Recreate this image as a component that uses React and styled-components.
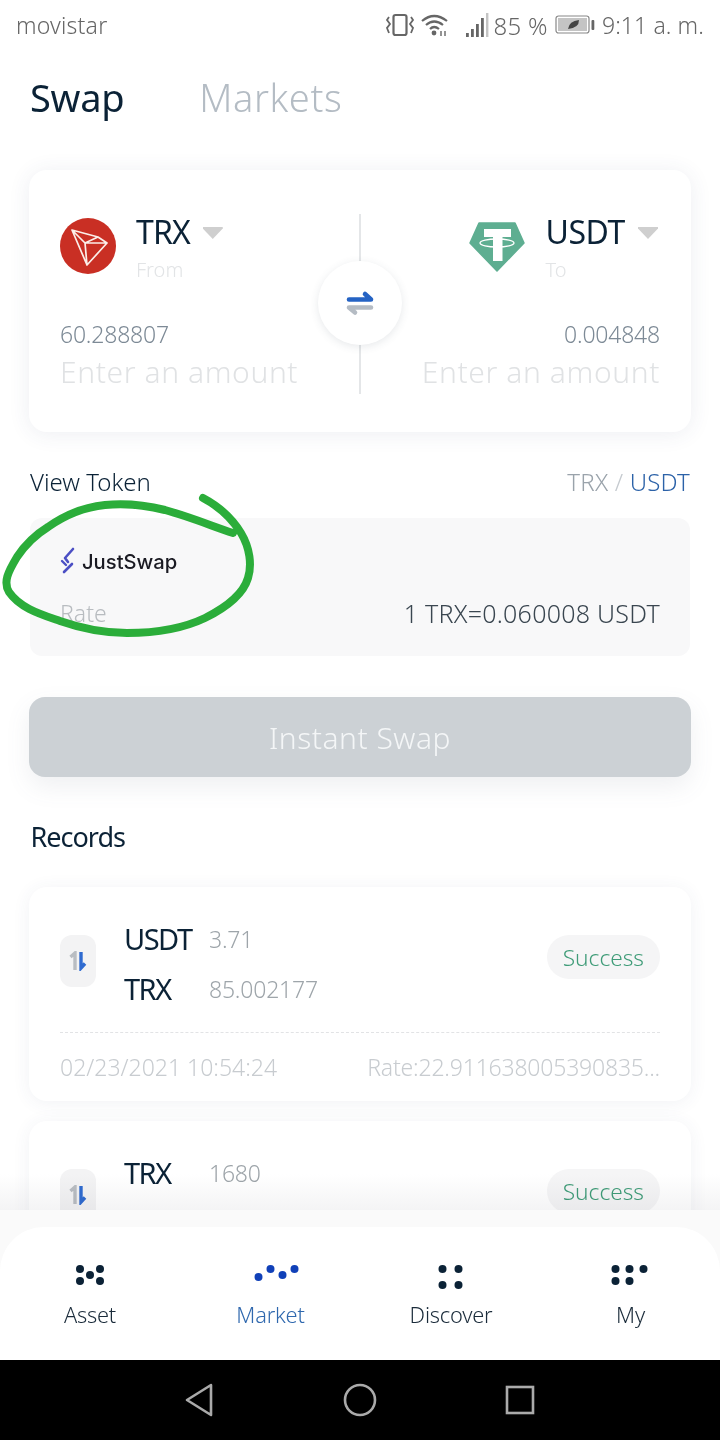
import React from "react";
import styled, { createGlobalStyle } from "styled-components";

const Global = createGlobalStyle`
  html, body { margin: 0; padding: 0; background: #fff; }
  body { font-family: "Noto Sans", "Open Sans", sans-serif; font-weight: 300; }
`;
const Phone = styled.div`
  position: relative; width: 720px; height: 1440px; display: flex; flex-direction: column;
  overflow: hidden; background: #fff;
`;
const StatusBar = styled.div`
  height: 50px; flex: none; display: flex; align-items: center; justify-content: space-between;
  padding: 0 16px; color: #666; font-size: 23px; letter-spacing: .2px; box-sizing: border-box;
`;
const StatusRight = styled.div`display: flex; align-items: center; color: #666; gap: 5px; letter-spacing: 0;`;
const StatusPct = styled.span`font-size: 24px; letter-spacing: .3px;`;
const StatusTime = styled.span`font-size: 23px; letter-spacing: .1px;`;
const Scroll = styled.div`flex: 1; min-height: 0; overflow: hidden; position: relative; display: flex; flex-direction: column; padding: 0 29px;`;
const Tabs = styled.div`display: flex; flex: none; gap: 75px; height: 120px; align-items: center; padding: 0 1px 26px; box-sizing: border-box;`;
const TabTitle = styled.div`font-size: 38px; font-weight: ${p => p.$on ? 400 : 300}; color: ${p => p.$on ? "#0b2236" : "#b4bcc4"}; letter-spacing: ${p => p.$on ? "-0.3px" : "0.6px"};`;
const SwapCard = styled.div`
  height: 262px; flex: none; border-radius: 18px; background: #fff; box-shadow: 0 2px 22px rgba(60,70,110,.09);
  display: grid; grid-template-columns: 1fr 1fr; position: relative; padding: 0 31px; box-sizing: border-box;
`;
const Side = styled.div`display: flex; flex-direction: column; align-items: ${p => p.$right ? "flex-end" : "flex-start"}; padding-top: 48px;`;
const TokenRow = styled.div`display: flex; gap: 20px; height: 100px; align-items: flex-start; margin-right: ${p => p.$right ? "2px" : "0"};`;
const TokenText = styled.div`display: flex; flex-direction: column; align-items: flex-start; margin-top: -4px;`;
const TokenName = styled.div`display: flex; align-items: center; gap: 13px; font-size: 32px; line-height: 36px; color: #0b2236; font-weight: 400; letter-spacing: ${p => p.$right ? "-.4px" : "-.9px"};`;
const Caret = styled.span`width: 20px; height: 12px; margin-top: 2px; background: #cfcfcf; clip-path: polygon(0 0, 100% 0, 100% 12%, 50% 100%, 0 12%);`;
const Dir = styled.div`font-size: 20px; line-height: 28px; color: #e2e4e6; margin-top: 6px;`;
const Balance = styled.div`font-size: 23px; line-height: 32px; color: #7d8a96; letter-spacing: -.2px;`;
const Amount = styled.div`font-size: 30px; line-height: 44px; color: #e0e2e4; letter-spacing: .6px;`;
const Divider = styled.div`position: absolute; left: 330px; top: 44px; bottom: 38px; width: 2px; background: #e4e6e8;`;
const SwapBtn = styled.div`
  position: absolute; left: 289px; top: 91px; width: 84px; height: 84px; border-radius: 50%; background: #fff;
  box-shadow: 0 2px 8px rgba(60,70,90,.12); display: flex; align-items: center; justify-content: center;
`;
const ViewRow = styled.div`display: flex; flex: none; justify-content: space-between; align-items: center; margin: 33px 1px 0; height: 32px;`;
const ViewLabel = styled.div`font-size: 24px; color: #0b2236;`;
const Pair = styled.div`font-size: 24px; color: #9aa3ab; letter-spacing: .2px; span { color: #2c62a8; } i { font-style: normal; color: #c5cacf; }`;
const RatePanel = styled.div`
  margin: 21px 1px 0; height: 138px; flex: none; border-radius: 12px; background: #f8f8f9; padding: 0 30px;
  display: flex; flex-direction: column; box-sizing: border-box;
`;
const Logo = styled.div`display: flex; align-items: center; gap: 5px; height: 32px; margin-top: 27px;`;
const LogoText = styled.span`font-family: "Inter", sans-serif; font-size: 20.2px; font-weight: 500; color: #1a1a22; letter-spacing: 0;`;
const RateRow = styled.div`display: flex; justify-content: space-between; align-items: center; margin-top: 18px; line-height: 36px;`;
const RateLabel = styled.span`font-size: 23px; color: #b8bcc0;`;
const RateValue = styled.span`font-size: 25px; color: #3a4650; letter-spacing: .25px;`;
const SwapAction = styled.div`
  margin-top: 41px; height: 80px; flex: none; border-radius: 16px; background: #ccd1d5; color: #f4f6f7;
  display: flex; align-items: center; justify-content: center; font-size: 30px; letter-spacing: .5px;
  box-shadow: 0 10px 24px rgba(100,110,130,.1);
`;
const RecordsTitle = styled.div`flex: none; font-size: 27px; line-height: 40px; margin: 40px 2px 30px 1.5px; color: #0b2236; font-weight: 400; letter-spacing: -1px;`;
const RecordCard = styled.div`
  flex: none; height: 214px; border-radius: 18px; background: #fff; box-shadow: 0 2px 18px rgba(60,70,110,.07);
  padding: 27px 31px 0; box-sizing: border-box; margin-bottom: 20px; display: flex; flex-direction: column;
`;
const RecordTop = styled.div`display: flex; align-items: flex-start; height: 118px; box-sizing: border-box;`;
const SwapChip = styled.div`width: 36px; height: 52px; margin-top: 21px; border-radius: 12px; background: #f3f3f4; display: flex; align-items: center; justify-content: center; flex: none; margin-right: 28px;`;
const Lines = styled.div`display: flex; flex-direction: column; gap: 14px; flex: 1; margin-top: 7px;`;
const Line = styled.div`display: flex; align-items: center; line-height: 36px; height: 36px;`;
const LineName = styled.div`width: 85px; font-size: 29px; font-weight: 400; color: #0b2236; letter-spacing: -1.5px;`;
const LineValue = styled.div`font-size: 23px; color: #9ea5aa; letter-spacing: -.2px;`;
const Badge = styled.div`height: 44px; margin-top: 21px; padding: 0 16px; border-radius: 22px; background: #f5f5f6; color: #3f9c78; font-size: 22.7px; display: flex; align-items: center;`;
const Dashed = styled.div`border-top: 1px dashed #e2e3e5;`;
const RecordBottom = styled.div`display: flex; justify-content: space-between; align-items: center; margin-top: 18px; font-size: 23px; color: #c8ccd0; white-space: nowrap;`;
const RateText = styled.span`letter-spacing: -.2px;`;
const Fade = styled.div`position: absolute; left: 0; right: 0; bottom: 0; height: 36px; background: linear-gradient(to bottom, #fff, #f4f4f5); mix-blend-mode: multiply;`;
const TabBarShell = styled.div`height: 150px; flex: none; background: #fafafa;`;
const TabBar = styled.div`
  height: 133px; margin-top: 17px; background: #fff; border-radius: 44px 44px 0 0; display: grid;
  grid-template-columns: 180px 181px 180px 179px; box-sizing: border-box; padding-top: 38px;
`;
const TabItem = styled.div`display: flex; flex-direction: column; align-items: center; gap: 11px; font-size: 21.8px; letter-spacing: -.2px; color: ${p => p.$on ? "#2f68ae" : "#1a2b3a"}; line-height: 30px;`;
const NavBar = styled.div`height: 80px; flex: none; background: #000; display: flex; align-items: center; justify-content: center;`;
const NavSlot = styled.div`width: 160px; display: flex; justify-content: center;`;
const Scribble = styled.svg`position: absolute; left: 0; top: 0; pointer-events: none;`;

const Dots = ({ pts, color }) => (
  <svg width="60" height="24" viewBox="0 0 60 24">
    {pts.map(([x, y], i) => <circle key={i} cx={x} cy={y} r="4" fill={color} />)}
  </svg>
);

const TronLogo = () => (
  <svg width="56" height="56" viewBox="0 0 56 56">
    <circle cx="28" cy="28" r="28" fill="#c92f24" />
    <path d="M12 12 L38 19 L47 25 L27 47 Z M12 12 L25 25 L27 47 M25 25 L47 25 M25 25 L38 19" fill="none" stroke="#fbeee9" strokeWidth="1.7" strokeLinejoin="round" />
  </svg>
);
const TetherLogo = () => (
  <svg width="56" height="54" viewBox="0 0 56 54">
    <path d="M10 5 H46 L55 25 L28 53 L1 25 Z" fill="#5eae91" stroke="#5eae91" strokeWidth="1.5" strokeLinejoin="round" />
    <path d="M15 11 H42 V19 H33.5 V43 H24 V19 H15 Z" fill="#fff" />
    <ellipse cx="28" cy="25" rx="17" ry="4" fill="none" stroke="#fff" strokeWidth="1.3" />
  </svg>
);
const SwapArrows = () => (
  <svg width="28" height="26" viewBox="0 0 28 26">
    <path d="M3 9.5 H25 L19 4" fill="none" stroke="#2563c4" strokeWidth="4.6" strokeLinecap="round" strokeLinejoin="round" />
    <path d="M25 17.5 H3 L9 22.5" fill="none" stroke="#b5bcc4" strokeWidth="4.6" strokeLinecap="round" strokeLinejoin="round" />
  </svg>
);
const UpDown = () => (
  <svg width="18" height="20" viewBox="0 0 18 20">
    <path d="M6 19 V2 L1.5 6" fill="none" stroke="#b9bdc2" strokeWidth="3.4" />
    <path d="M12 1 V17 L16 12.5" fill="none" stroke="#2f6bd0" strokeWidth="3.4" />
  </svg>
);
const JustSwapMark = () => (
  <svg width="17" height="28" viewBox="0 0 17 28">
    <path d="M13 2 L5 11 L8 15" fill="none" stroke="#4b4fc4" strokeWidth="2.6" strokeLinejoin="round" strokeLinecap="round" />
    <path d="M12 17 L4 25" fill="none" stroke="#4b4fc4" strokeWidth="2.6" strokeLinecap="round" />
    <path d="M2 14 L6 18" fill="none" stroke="#4b4fc4" strokeWidth="2.4" strokeLinecap="round" />
  </svg>
);

const C = "#666";
const Vibrate = () => (
  <svg width="30" height="26" viewBox="0 0 30 26">
    <rect x="8.5" y="3" width="13" height="20" rx="2" fill="none" stroke={C} strokeWidth="2.2" />
    <path d="M4 5 L2 8 L5 12 L2 16 L4 21 M26 5 L28 8 L25 12 L28 16 L26 21" fill="none" stroke={C} strokeWidth="1.8" />
  </svg>
);
const Wifi = () => (
  <svg width="40" height="24" viewBox="0 0 40 24">
    <path d="M2 8 Q14 -2 27 8 M6 12 Q14 5 23 12 M10 16 Q14 12 19 16" fill="none" stroke={C} strokeWidth="2.2" />
    <circle cx="14" cy="20" r="2.4" fill={C} />
    <path d="M21 18 V23 M25 18 V23" stroke={C} strokeWidth="1.4" />
  </svg>
);
const Signal = () => (
  <svg width="24" height="28" viewBox="0 0 24 28">
    {[[1, 22, 4], [6, 18, 8], [11, 13, 13], [16, 7, 19]].map(([x, y, h]) => <rect key={x} x={x} y={y} width="2.8" height={h} fill={C} />)}
    <rect x="21" y="2" width="2.4" height="24" fill="#c4c4c4" />
  </svg>
);
const Battery = () => (
  <svg width="44" height="22" viewBox="-2 0 44 22">
    <rect x="1" y="2" width="33" height="17" rx="2.5" fill="none" stroke="#888" strokeWidth="1.2" />
    <rect x="3" y="4" width="29" height="13" fill="#c4c4c4" />
    <rect x="36.5" y="6" width="2.8" height="10" rx="1" fill={C} />
    <path d="M13 15 Q14 7 24 6 Q24 14 13 15 Z" fill="#444" />
  </svg>
);

const Token = ({ logo, name, dir, right }) => (
  <TokenRow $right={right}>
    {logo}
    <TokenText>
      <TokenName $right={right}>{name}<Caret /></TokenName>
      <Dir>{dir}</Dir>
    </TokenText>
  </TokenRow>
);

const Record = ({ a, av, b, bv, bottom }) => (
  <RecordCard>
    <RecordTop>
      <SwapChip><UpDown /></SwapChip>
      <Lines>
        <Line><LineName>{a}</LineName><LineValue>{av}</LineValue></Line>
        {b && <Line><LineName>{b}</LineName><LineValue>{bv}</LineValue></Line>}
      </Lines>
      <Badge>Success</Badge>
    </RecordTop>
    <Dashed />
    {bottom && <RecordBottom><span>02/23/2021 10:54:24</span><RateText>Rate:22.911638005390835...</RateText></RecordBottom>}
  </RecordCard>
);

export default function App() {
  return (
    <Phone>
      <Global />
      <StatusBar>
        <span>movistar</span>
        <StatusRight>
          <Vibrate /><Wifi /><Signal /><StatusPct>85 %</StatusPct><Battery /><StatusTime>9:11 a. m.</StatusTime>
        </StatusRight>
      </StatusBar>
      <Scroll>
        <Tabs><TabTitle $on>Swap</TabTitle><TabTitle>Markets</TabTitle></Tabs>
        <SwapCard>
          <Side>
            <Token logo={<TronLogo />} name="TRX" dir="From" />
            <Balance>60.288807</Balance>
            <Amount>Enter an amount</Amount>
          </Side>
          <Side $right>
            <Token logo={<TetherLogo />} name="USDT" dir="To" right />
            <Balance>0.004848</Balance>
            <Amount>Enter an amount</Amount>
          </Side>
          <Divider />
          <SwapBtn><SwapArrows /></SwapBtn>
        </SwapCard>
        <ViewRow>
          <ViewLabel>View Token</ViewLabel>
          <Pair>TRX <i>/</i> <span>USDT</span></Pair>
        </ViewRow>
        <RatePanel>
          <Logo><JustSwapMark /><LogoText>JustSwap</LogoText></Logo>
          <RateRow><RateLabel>Rate</RateLabel><RateValue>1 TRX=0.060008 USDT</RateValue></RateRow>
        </RatePanel>
        <SwapAction>Instant Swap</SwapAction>
        <RecordsTitle>Records</RecordsTitle>
        <Record a="USDT" av="3.71" b="TRX" bv="85.002177" bottom />
        <Record a="TRX" av="1680" />
        <Fade />
      </Scroll>
      <TabBarShell>
        <TabBar>
          <TabItem><Dots pts={[[20, 4], [40, 4], [30, 10], [20, 16], [40, 16]]} color="#0b2236" />Asset</TabItem>
          <TabItem $on><Dots pts={[[17.5, 12], [29.5, 4], [41.5, 10], [53.5, 4]]} color="#1040b8" />Market</TabItem>
          <TabItem><Dots pts={[[21.5, 4], [37.5, 4], [21.5, 20], [37.5, 20]]} color="#0b2236" />Discover</TabItem>
          <TabItem><Dots pts={[[14.5, 4], [28.5, 4], [42.5, 4], [14.5, 16], [28.5, 16]]} color="#0b2236" />My</TabItem>
        </TabBar>
      </TabBarShell>
      <NavBar>
        <NavSlot><svg width="32" height="34" viewBox="0 0 32 34"><path d="M27 2 L3 17 L27 32 Z" fill="none" stroke="#aaa" strokeWidth="2.6" strokeLinejoin="round" /></svg></NavSlot>
        <NavSlot><svg width="34" height="34" viewBox="0 0 34 34"><circle cx="17" cy="17" r="15" fill="none" stroke="#aaa" strokeWidth="2.6" /></svg></NavSlot>
        <NavSlot><svg width="30" height="30" viewBox="0 0 30 30"><rect x="2" y="2" width="26" height="26" fill="none" stroke="#aaa" strokeWidth="2.6" /></svg></NavSlot>
      </NavBar>
      <Scribble width="720" height="1440" viewBox="0 0 720 1440">
        <path d="M203 498 C220 507 233 520 241 533 C250 548 252 565 248 578 C243 595 225 608 205 618 C180 630 150 633 127 633 C100 633 80 628 60 621 C40 614 20 608 9 592 C3 582 8 572 17 557 C25 545 35 535 48 527 C65 515 85 507 105 505 C125 503 145 505 165 510 C190 517 212 526 233 533" fill="none" stroke="#2bad3a" strokeWidth="8" strokeLinecap="round" strokeLinejoin="round" />
      </Scribble>
    </Phone>
  );
}
